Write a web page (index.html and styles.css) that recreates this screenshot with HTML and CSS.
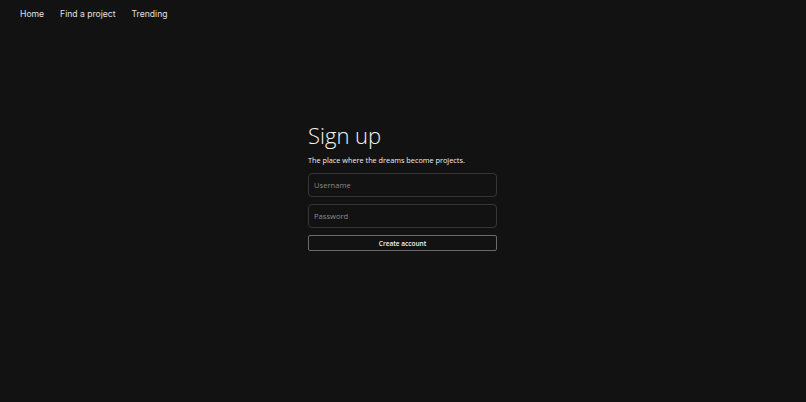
FILE: index.html
```html
<!DOCTYPE html>
<html lang="en">
<head>
<meta charset="utf-8">
<title>Sign up</title>
<link rel="stylesheet" href="styles.css">
</head>
<body>
<nav class="nav">
  <a class="nav-link" href="#">Home</a>
  <a class="nav-link" href="#">Find a project</a>
  <a class="nav-link" href="#">Trending</a>
</nav>
<main class="main">
  <form class="form">
    <h1 class="title">Sign up</h1>
    <p class="subtitle">The place where the dreams become projects.</p>
    <input class="field" type="text" placeholder="Username">
    <input class="field" type="password" placeholder="Password">
    <button class="btn" type="button">Create account</button>
  </form>
</main>
</body>
</html>
```
FILE: styles.css
```css
html, body {
  margin: 0;
  padding: 0;
  background: #121212;
  height: 100%;
}
body {
  font-family: "Open Sans", "DejaVu Sans", sans-serif;
  color: #eeeeee;
}
.nav {
  display: flex;
  gap: 16px;
  padding: 1px 20px 0;
  height: 26px;
  align-items: center;
}
.nav-link {
  font-family: Inter, "Liberation Sans", sans-serif;
  font-size: 8.6px;
  color: #e0e0e0;
  text-decoration: none;
}
.main {
  display: flex;
  justify-content: center;
  padding: 93px 1px 0 0;
}
.form {
  width: 189px;
  display: flex;
  flex-direction: column;
}
.title {
  margin: 0;
  font-size: 22px;
  font-weight: 300;
  line-height: 30px;
  color: #f2f2f2;
}
.subtitle {
  margin: 4.5px 0 7.5px;
  font-size: 7.3px;
  line-height: 11px;
  color: #f0f0f0;
}
.field {
  box-sizing: border-box;
  height: 24px;
  margin: 0 0 7px;
  padding: 0 5px;
  background: transparent;
  border: 1px solid #363636;
  border-radius: 4px;
  font-family: inherit;
  font-size: 7.6px;
  color: #dddddd;
  outline: none;
}
.field::placeholder {
  color: #8a8a8a;
}
.btn {
  box-sizing: border-box;
  height: 16px;
  margin: 0;
  padding: 0;
  background: transparent;
  border: 1px solid #6a6a6a;
  border-radius: 2px;
  font-family: inherit;
  font-size: 6.5px;
  font-weight: 600;
  color: #f4f4f4;
  cursor: pointer;
}
```
